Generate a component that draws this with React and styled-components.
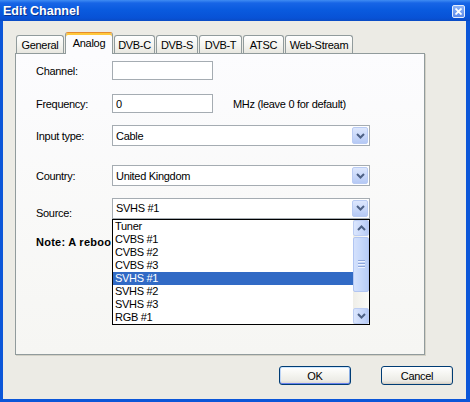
import React from "react";
import styled, { createGlobalStyle } from "styled-components";

const GlobalStyle = createGlobalStyle`
  html, body { margin: 0; padding: 0; background: #ffffff; }
  body {
    font-family: "Liberation Sans", Arial, sans-serif;
    font-size: 11px;
    letter-spacing: -0.3px;
    color: #000;
  }
`;

const Window = styled.div`
  width: 470px;
  height: 402px;
  box-sizing: border-box;
  display: flex;
  flex-direction: column;
  background: #0b56d8;
`;

const TitleBar = styled.div`
  height: 21px;
  flex: none;
  display: flex;
  align-items: center;
  padding: 0 5px 0 3px;
  background: linear-gradient(#3f8cf3 0, #1765e6 3px, #0a5bdf 45%, #0852d6 85%, #0a4bc4 100%);
`;

const Title = styled.div`
  flex: 1;
  color: #fff;
  font-weight: bold;
  font-size: 12.5px;
  letter-spacing: 0;
  text-shadow: 1px 1px 0 #0a318f;
`;

const CloseButton = styled.div`
  width: 13px;
  height: 13px;
  box-sizing: border-box;
  border: 1px solid #e6eefc;
  border-radius: 2px;
  background: linear-gradient(#8ab2f7, #5d8ced);
  display: flex;
  align-items: center;
  justify-content: center;
  margin-top: 1px;
`;

const Client = styled.div`
  flex: 1;
  margin: 0 4px 3px 3px;
  background: #ecebe5;
  padding: 11px 0 0 12px;
  display: flex;
  flex-direction: column;
`;

const TabStrip = styled.div`
  height: 21px;
  display: flex;
  align-items: flex-end;
  gap: 1px;
  padding-left: 1px;
`;

const Tab = styled.div`
  box-sizing: border-box;
  width: ${(p) => p.$w}px;
  height: ${(p) => (p.$active ? 22 : 18)}px;
  margin-bottom: ${(p) => (p.$active ? -1 : 0)}px;
  border: 1px solid #919b9c;
  border-bottom: none;
  border-radius: 3px 3px 0 0;
  background: ${(p) =>
    p.$active ? "#fcfcfe" : "linear-gradient(#ffffff, #f4f4f0 55%, #e8e7e0)"};
  box-shadow: ${(p) => (p.$active ? "inset 0 2px 0 #ffc83c" : "none")};
  border-top-color: ${(p) => (p.$active ? "#e68b2c" : "#919b9c")};
  display: flex;
  align-items: center;
  justify-content: center;
  padding-bottom: ${(p) => (p.$active ? 2 : 0)}px;
  position: relative;
  z-index: ${(p) => (p.$active ? 2 : 1)};
  white-space: nowrap;
`;

const Panel = styled.div`
  width: 410px;
  height: 302px;
  box-sizing: border-box;
  border: 1px solid #919b9c;
  background: linear-gradient(#fcfcfe, #f6f6f3);
  box-shadow: 1px 1px 0 #d3d1c6;
  padding: 7px 0 0 20px;
  display: flex;
  flex-direction: column;
  position: relative;
`;

const Row = styled.div`
  display: flex;
  align-items: center;
  margin-top: ${(p) => p.$gap || 0}px;
`;

const Label = styled.div`
  width: 76px;
  flex: none;
  margin-top: ${(p) => p.$shift || 0}px;
`;

const TextBox = styled.input`
  width: 101px;
  height: 19px;
  box-sizing: border-box;
  border: 1px solid #a5acb2;
  background: #fff;
  padding: 0 3px;
  margin: 0;
  font: inherit;
  letter-spacing: inherit;
  outline: none;
`;

const Hint = styled.div`
  margin-left: 20px;
`;

const ComboWrap = styled.div`
  position: relative;
`;

const Combo = styled.div`
  width: 258px;
  height: 21px;
  box-sizing: border-box;
  border: 1px solid #a5acb2;
  background: #fff;
  display: flex;
  align-items: center;
  padding-left: 3px;
`;

const ComboText = styled.div`
  flex: 1;
`;

const ArrowButton = styled.div`
  width: 16px;
  height: 17px;
  margin: 1px;
  box-sizing: border-box;
  border: 1px solid #b9cbf3;
  border-radius: 2px;
  background: linear-gradient(#dde7fd, #c6d6f9 60%, #b5c9f5);
  display: flex;
  align-items: center;
  justify-content: center;
`;

const DropList = styled.div`
  position: absolute;
  left: 0;
  top: 100%;
  width: 258px;
  height: 106px;
  box-sizing: border-box;
  border: 1px solid #000;
  background: #fff;
  display: flex;
  z-index: 5;
`;

const Items = styled.div`
  flex: 1;
  display: flex;
  flex-direction: column;
`;

const Item = styled.div`
  height: 13px;
  line-height: 13px;
  padding-left: 2px;
  background: ${(p) => (p.$selected ? "#316ac5" : "transparent")};
  color: ${(p) => (p.$selected ? "#fff" : "#000")};
`;

const ScrollBar = styled.div`
  width: 16px;
  display: flex;
  flex-direction: column;
  background: linear-gradient(90deg, #efeee8, #fbfbf8);
`;

const ScrollButton = styled.div`
  height: 16px;
  box-sizing: border-box;
  border: 1px solid #bccdf3;
  border-radius: 2px;
  background: linear-gradient(90deg, #dbe6fd, #c3d4f9 70%, #b4c8f4);
  display: flex;
  align-items: center;
  justify-content: center;
`;

const Track = styled.div`
  flex: 1;
  display: flex;
  flex-direction: column;
  padding-top: 1px;
`;

const Thumb = styled.div`
  height: 55px;
  box-sizing: border-box;
  border: 1px solid #b1c5f2;
  border-radius: 2px;
  background: linear-gradient(90deg, #d4e1fc, #c6d8fb 50%, #b8cdf7);
  display: flex;
  flex-direction: column;
  align-items: center;
  justify-content: center;
  gap: 1px;
`;

const Grip = styled.div`
  width: 7px;
  height: 1px;
  background: #8fa7dc;
  border-bottom: 1px solid #eef3fe;
`;

/* the dropdown list lies over the rest of this note, so only its start shows */
const Note = styled.div`
  margin-top: 17px;
  width: 76px;
  overflow: hidden;
  font-weight: bold;
  letter-spacing: 0.25px;
  white-space: nowrap;
`;

const ButtonRow = styled.div`
  display: flex;
  justify-content: flex-end;
  gap: 30px;
  padding-right: 13px;
  margin-top: 11px;
`;

const Button = styled.div`
  width: 72px;
  height: 19px;
  box-sizing: border-box;
  border: 1px solid #003c74;
  border-radius: 3px;
  background: linear-gradient(#ffffff, #f4f4f0 45%, #ecebe6 80%, #d9d4ca);
  box-shadow: ${(p) =>
    p.$default
      ? "inset 0 1px 0 #cee7ff, inset 0 -1px 0 #6982ee, inset 1px 0 0 #bcd4f6, inset -1px 0 0 #89ade4"
      : "inset 0 -1px 0 #d6d0c5, inset -1px 0 0 #e3e0d8"};
  display: flex;
  align-items: center;
  justify-content: center;
`;

const Chevron = ({ up }) => (
  <svg width="9" height="6" viewBox="0 0 9 6">
    <polyline
      points={up ? "1,5 4.5,1.5 8,5" : "1,1 4.5,4.5 8,1"}
      fill="none"
      stroke="#4d6185"
      strokeWidth="2"
    />
  </svg>
);

const tabs = [
  ["General", 48],
  ["Analog", 48],
  ["DVB-C", 41],
  ["DVB-S", 42],
  ["DVB-T", 43],
  ["ATSC", 41],
  ["Web-Stream", 68],
];

const sources = ["Tuner", "CVBS #1", "CVBS #2", "CVBS #3", "SVHS #1", "SVHS #2", "SVHS #3", "RGB #1"];

export default function App() {
  return (
    <>
      <GlobalStyle />
      <Window>
        <TitleBar>
          <Title>Edit Channel</Title>
          <CloseButton>
            <svg width="7" height="7" viewBox="0 0 7 7">
              <path d="M0.5 0.5 L6.5 6.5 M6.5 0.5 L0.5 6.5" stroke="#fff" strokeWidth="1.8" />
            </svg>
          </CloseButton>
        </TitleBar>
        <Client>
          <TabStrip>
            {tabs.map(([name, w]) => (
              <Tab key={name} $w={w} $active={name === "Analog"}>
                {name}
              </Tab>
            ))}
          </TabStrip>
          <Panel>
            <Row>
              <Label>Channel:</Label>
              <TextBox defaultValue="" readOnly />
            </Row>
            <Row $gap={14}>
              <Label>Frequency:</Label>
              <TextBox defaultValue="0" readOnly />
              <Hint>MHz (leave 0 for default)</Hint>
            </Row>
            <Row $gap={12}>
              <Label>Input type:</Label>
              <Combo>
                <ComboText>Cable</ComboText>
                <ArrowButton><Chevron /></ArrowButton>
              </Combo>
            </Row>
            <Row $gap={19}>
              <Label>Country:</Label>
              <Combo>
                <ComboText>United Kingdom</ComboText>
                <ArrowButton><Chevron /></ArrowButton>
              </Combo>
            </Row>
            <Row $gap={11}>
              <Label $shift={10}>Source:</Label>
              <ComboWrap>
                <Combo>
                  <ComboText>SVHS #1</ComboText>
                  <ArrowButton><Chevron /></ArrowButton>
                </Combo>
                <DropList>
                  <Items>
                    {sources.map((s) => (
                      <Item key={s} $selected={s === "SVHS #1"}>{s}</Item>
                    ))}
                  </Items>
                  <ScrollBar>
                    <ScrollButton><Chevron up /></ScrollButton>
                    <Track>
                      <Thumb>
                        <Grip />
                        <Grip />
                        <Grip />
                      </Thumb>
                    </Track>
                    <ScrollButton><Chevron /></ScrollButton>
                  </ScrollBar>
                </DropList>
              </ComboWrap>
            </Row>
            <Note>Note: A reboo</Note>
          </Panel>
          <ButtonRow>
            <Button $default>OK</Button>
            <Button>Cancel</Button>
          </ButtonRow>
        </Client>
      </Window>
    </>
  );
}
